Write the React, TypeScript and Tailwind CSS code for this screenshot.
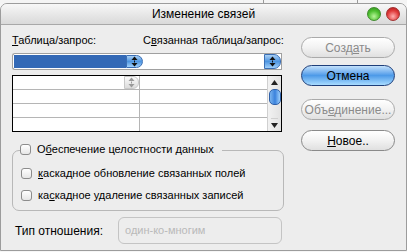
import React from "react";

const font = { fontFamily: '"Liberation Sans", Arial, sans-serif' };

function Spinner({ small = false }: { small?: boolean }) {
  return (
    <div
      className={
        small
          ? "flex h-[13px] w-[15px] flex-col items-center justify-center rounded-r-[6px] border border-[#c8c8c8] bg-gradient-to-b from-[#fafafa] to-[#dcdcdc]"
          : "flex h-full w-[17px] flex-col items-center justify-center gap-[1px] rounded-r-[7px] border border-[#3b6fb5] bg-gradient-to-b from-[#a9d0f5] via-[#4d95e0] to-[#9fd0fb]"
      }
    >
      <svg width="7" height="11" viewBox="0 0 7 11">
        <polygon points="3.5,0.5 6.5,4 0.5,4" fill={small ? "#9a9a9a" : "#111"} />
        <rect x="3" y="4.5" width="1" height="2" fill={small ? "#9a9a9a" : "#111"} />
        <polygon points="0.5,7 6.5,7 3.5,10.5" fill={small ? "#9a9a9a" : "#111"} />
      </svg>
    </div>
  );
}

function Pill({
  label,
  blue = false,
  disabled = false,
  underline,
}: {
  label: string;
  blue?: boolean;
  disabled?: boolean;
  underline?: number;
}) {
  const chars = label.split("");
  return (
    <div
      className={
        "flex h-[21px] w-[94px] items-center justify-center rounded-full border text-[12px] leading-none " +
        (blue
          ? "border-[#1f3f7a] bg-gradient-to-b from-[#c3e1fb] via-[#4d9ae8] to-[#a8dcff] text-black"
          : "border-[#8a8a8a] bg-gradient-to-b from-[#ffffff] via-[#f2f2f2] to-[#e0e0e0] ") +
        (disabled ? " border-[#aaaaaa] text-[#8a8a8a]" : blue ? "" : " text-black")
      }
    >
      <span>
        {chars.map((c, i) => (
          <span key={i} className={i === underline ? "underline underline-offset-1" : ""}>
            {c}
          </span>
        ))}
      </span>
    </div>
  );
}

function Check({ label, u }: { label: string; u: number }) {
  return (
    <div className="flex items-center gap-[6px]">
      <div className="h-[11px] w-[11px] rounded-[3px] border border-[#8c8c8c] bg-gradient-to-b from-[#ffffff] to-[#e6e6e6]" />
      <span className="text-[11px] leading-none text-black">
        {label.split("").map((c, i) => (
          <span key={i} className={i === u ? "underline underline-offset-1" : ""}>
            {c}
          </span>
        ))}
      </span>
    </div>
  );
}

export default function App() {
  return (
    <div className="h-[252px] w-[407px] overflow-hidden bg-[#f6f6f6]" style={font}>
      {/* background strip */}
      <div className="flex h-[3px]">
        <div className="w-[263px] bg-[#f4f4f4]" />
        <div className="w-[94px] border-l border-[#9a9a9a] bg-[#f4f4f4]" />
        <div className="flex-1 border-l border-[#9a9a9a] bg-[#f4f4f4]" />
      </div>
      <div className="flex h-[248px] flex-col overflow-hidden rounded-t-[7px] border border-[#9c9c9c] bg-[#ededed]">
        {/* title bar */}
        <div className="relative flex h-[21px] shrink-0 items-center justify-center border-b border-[#a8a8a8] bg-gradient-to-b from-[#f7f7f7] to-[#d9d9d9]">
          <span className="text-[12px] leading-none text-black">Изменение связей</span>
          <div className="absolute right-[6px] top-[3px] flex gap-[5px]">
            <div className="h-[14px] w-[14px] rounded-full border border-[#3f8a2c] bg-[radial-gradient(circle_at_50%_70%,#b8f59a_0%,#4cbf2e_55%,#2f8a1c_100%)]" />
            <div className="h-[14px] w-[14px] rounded-full border border-[#a23030] bg-[radial-gradient(circle_at_50%_70%,#ffb0b0_0%,#e03a3a_55%,#a81818_100%)]" />
          </div>
        </div>
        {/* body */}
        <div className="flex flex-1">
          <div className="flex w-[284px] flex-col pl-[11px]">
            <div className="mt-[9px] flex text-[11px] leading-[13px] text-black">
              <span className="w-[131px]">
                <span className="underline underline-offset-1">Т</span>аблица/запрос:
              </span>
              <span>
                С<span className="underline underline-offset-1">в</span>язанная таблица/запрос:
              </span>
            </div>
            {/* combos */}
            <div className="mt-[6px] flex h-[17px]">
              <div className="flex w-[131px] rounded-l-[3px] border border-r-0 border-[#a0a0a0] bg-white p-[1px] pr-0">
                <div className="flex-1 bg-[#3369b6]" />
                <Spinner />
              </div>
              <div className="flex w-[139px] border border-l-0 border-[#a0a0a0] bg-white pl-[1px]">
                <div className="flex-1" />
                <Spinner />
              </div>
            </div>
            {/* grid */}
            <div className="mt-[5px] flex h-[57px] w-[270px] border border-black bg-white">
              <div className="flex w-[127px] flex-col border-r border-[#b5b5b5]">
                <div className="flex h-[14px] justify-end border-b border-[#b5b5b5]">
                  <Spinner small />
                </div>
                <div className="h-[14px] border-b border-[#b5b5b5]" />
                <div className="h-[14px] border-b border-[#b5b5b5]" />
                <div className="flex-1" />
              </div>
              <div className="flex flex-1 flex-col">
                <div className="h-[14px] border-b border-[#b5b5b5]" />
                <div className="h-[14px] border-b border-[#b5b5b5]" />
                <div className="h-[14px] border-b border-[#b5b5b5]" />
                <div className="flex-1" />
              </div>
              <div className="flex w-[14px] flex-col items-center border-l border-[#d0d0d0] bg-gradient-to-r from-[#f2f2f2] to-[#e2e2e2]">
                <div className="flex h-[13px] items-center justify-center">
                  <svg width="7" height="5" viewBox="0 0 7 5">
                    <polygon points="3.5,0 7,5 0,5" fill="#222" />
                  </svg>
                </div>
                <div className="h-[16px] w-[12px] rounded-[5px] border border-[#2e5fa8] bg-gradient-to-r from-[#7ab4ef] via-[#3a82dc] to-[#9fd0fb]" />
                <div className="flex-1" />
                <div className="flex h-[13px] items-center justify-center border-t border-[#d0d0d0]">
                  <svg width="7" height="5" viewBox="0 0 7 5">
                    <polygon points="0,0 7,0 3.5,5" fill="#222" />
                  </svg>
                </div>
              </div>
            </div>
            {/* group box */}
            <div className="relative mt-[18px] h-[61px] w-[272px] rounded-[7px] border border-[#b8b8b8]">
              <div className="absolute -top-[7px] left-[7px] bg-[#ededed] pr-[8px]">
                <Check label="Обеспечение целостности данных" u={1} />
              </div>
              <div className="flex flex-col gap-[11px] pl-[8px] pt-[17px]">
                <Check label="каскадное обновление связанных полей" u={0} />
                <Check label="каскадное удаление связанных записей" u={2} />
              </div>
            </div>
            {/* relation type */}
            <div className="mt-[6px] flex items-center">
              <span className="w-[106px] pl-[3px] text-[12px] leading-none text-black">Тип отношения:</span>
              <div className="flex h-[27px] w-[164px] items-center rounded-[6px] border border-[#c4c4c4] pl-[6px] text-[11px] text-[#b9b9b9]">
                один-ко-многим
              </div>
            </div>
          </div>
          {/* buttons */}
          <div className="ml-[16px] flex flex-col pt-[12px]">
            <Pill label="Создать" disabled underline={4} />
            <div className="mt-[7px]">
              <Pill label="Отмена" blue />
            </div>
            <div className="mt-[13px]">
              <Pill label="Объединение..." disabled underline={3} />
            </div>
            <div className="mt-[10px]">
              <Pill label="Новое.." underline={0} />
            </div>
          </div>
        </div>
      </div>
    </div>
  );
}
